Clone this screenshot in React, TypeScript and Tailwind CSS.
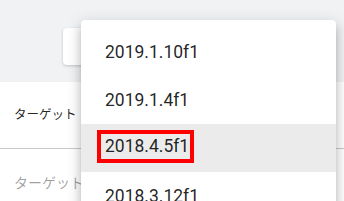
import React from "react";

const versions = ["2019.1.10f1", "2019.1.4f1", "2018.4.5f1", "2018.3.12f1"];

export default function App() {
  return (
    <div className="relative w-[344px] h-[201px] overflow-hidden bg-white font-['Roboto','Noto_Sans_CJK_JP',sans-serif]">
      <div className="h-[82px] bg-[#f1f2f4] pt-[28px] pl-[63px]">
        <div className="w-[120px] h-[37px] rounded bg-white shadow-[0px_1px_3px_rgba(0,0,0,0.2)]" />
      </div>
      <div className="flex h-[66px] items-center pl-[14px] text-[12.5px] text-[rgba(0,0,0,0.87)]">
        ターゲット
      </div>
      <div className="h-px w-full bg-[#c9c9c9]" />
      <div className="flex h-[70px] items-start pt-[24px] pl-[14px] text-[14px] text-[rgba(0,0,0,0.38)]">
        ターゲット
      </div>

      {/* open dropdown */}
      <div className="absolute left-[81px] top-[20px] w-[255px] h-[240px] rounded bg-white py-2 shadow-[0px_5px_5px_-3px_rgba(0,0,0,0.2),0px_8px_10px_1px_rgba(0,0,0,0.14),0px_3px_14px_2px_rgba(0,0,0,0.12)]">
        {versions.map((v, i) => (
          <div
            key={v}
            className={
              "flex h-[48px] items-center pl-6 text-[17.5px] leading-6 text-[rgba(0,0,0,0.87)] " +
              (i === 2 ? "bg-[#ebebeb]" : "")
            }
          >
            {i === 2 ? (
              <span className="-ml-2 mt-[-3px] inline-block border-4 border-[#ff0000] pl-1 pr-px leading-[25px]">
                {v}
              </span>
            ) : (
              v
            )}
          </div>
        ))}
      </div>
    </div>
  );
}
